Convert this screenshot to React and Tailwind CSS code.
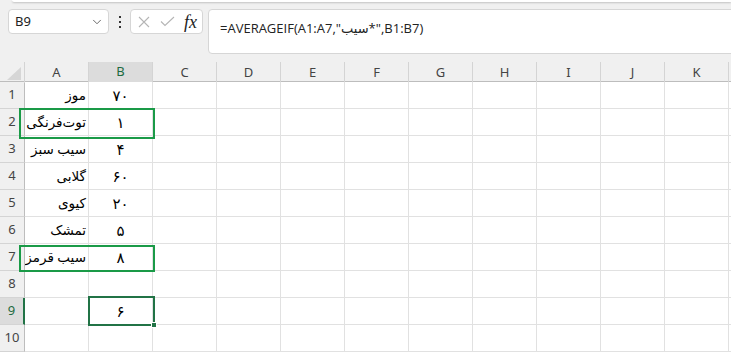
import { ChevronDown } from 'lucide-react'

const cols = ['A', 'B', 'C', 'D', 'E', 'F', 'G', 'H', 'I', 'J', 'K', '']

const rows = [
  ['موز', '۷۰'],
  ['توت‌فرنگی', '۱'],
  ['سیب سبز', '۴'],
  ['گلابی', '۶۰'],
  ['کیوی', '۲۰'],
  ['تمشک', '۵'],
  ['سیب قرمز', '۸'],
  ['', ''],
  ['', '۶'],
  ['', ''],
]

const uiFont = { fontFamily: '"Noto Sans", "DejaVu Sans", sans-serif' }

const Toolbar = () => (
  <div className="flex items-start h-[54px] pt-[9px] pl-[8px]">
    {/* name box */}
    <div className="flex items-center justify-between w-[101px] h-[25px] bg-white border border-[#d6d6d6] rounded-[4px] pl-[6px] pr-[4px]">
      <span className="text-[13px] text-[#222]">B9</span>
      <ChevronDown size={14} strokeWidth={1.5} className="text-[#555]" />
    </div>

    {/* more */}
    <div className="w-[21px] h-[25px] flex items-center justify-center">
      <svg width="4" height="14" viewBox="0 0 4 14">
        <rect x="1" y="1" width="2" height="2" fill="#333" />
        <rect x="1" y="6" width="2" height="2" fill="#333" />
        <rect x="1" y="11" width="2" height="2" fill="#333" />
      </svg>
    </div>

    {/* cancel / enter / fx */}
    <div className="flex items-center w-[73px] h-[25px] bg-white border border-[#d6d6d6] rounded-[4px] pl-[6px]">
      <svg width="12" height="12" viewBox="0 0 12 12" className="ml-[1px]">
        <path d="M1 1 L11 11 M11 1 L1 11" stroke="#b5b5b5" strokeWidth="1.1" fill="none" />
      </svg>
      <svg width="15" height="11" viewBox="0 0 15 11" className="ml-[10px]">
        <path d="M1 5.5 L5 9.5 L14 1" stroke="#b5b5b5" strokeWidth="1.1" fill="none" />
      </svg>
      <span
        className="ml-[9px] text-[18px] italic text-[#222] leading-none"
        style={{ fontFamily: '"Liberation Serif", "DejaVu Serif", serif' }}
      >
        fx
      </span>
    </div>

    {/* formula bar */}
    <div className="flex-1 h-[45px] ml-[5px] mr-[-8px] bg-white border border-[#d6d6d6] rounded-[4px] pl-[11px] pt-[5px]">
      <span className="text-[13px] text-[#222]" style={{ fontFamily: '"Open Sans", "DejaVu Sans", sans-serif' }}>
        =AVERAGEIF(A1:A7,"سیب*",B1:B7)
      </span>
    </div>
  </div>
)

const Grid = () => (
  <div className="relative mt-[8px]">
    {/* header row */}
    <div className="grid grid-cols-[25px_repeat(12,64px)] h-[20px] border-b border-[#bdbdbd]">
      <div className="relative border-r border-[#d4d4d4]">
        <svg width="14" height="13" viewBox="0 0 14 13" className="absolute right-[3px] bottom-[3px]">
          <path d="M14 0 L14 13 L0 13 Z" fill="#d6d6d6" />
        </svg>
      </div>
      {cols.map((c, j) => (
        <div
          key={j}
          className={`flex items-center justify-center text-[13px] border-r border-[#d4d4d4] ${
            c === 'B' ? 'bg-[#dcdcdc] text-[#1e6b3f] border-b-2 border-b-[#217346] -mb-[1px]' : 'text-[#444]'
          }`}
        >
          {c}
        </div>
      ))}
    </div>

    {/* body rows */}
    {rows.map((r, i) => (
      <div key={i} className="grid grid-cols-[25px_repeat(12,64px)] h-[27px]">
        <div
          className={`flex items-center justify-center text-[13px] border-b border-[#d4d4d4] ${
            i === 8
              ? 'bg-[#dcdcdc] text-[#1e6b3f] border-r-2 border-r-[#217346]'
              : 'text-[#444] border-r border-r-[#bdbdbd]'
          }`}
        >
          {i + 1}
        </div>
        <div className="flex items-center justify-end overflow-hidden pr-[2px] bg-white border-r border-b border-[#e1e1e1]">
          <span dir="rtl" className="whitespace-nowrap text-[13.5px] text-black" style={uiFont}>
            {r[0]}
          </span>
        </div>
        <div className="flex items-center justify-center bg-white border-r border-b border-[#e1e1e1]">
          <span className="text-[15px] text-black" style={uiFont}>
            {r[1]}
          </span>
        </div>
        {cols.slice(2).map((c, j) => (
          <div key={j} className="bg-white border-r border-b border-[#e1e1e1]" />
        ))}
      </div>
    ))}

    {/* annotation boxes */}
    <div className="absolute left-[19px] top-[46px] w-[136px] h-[31px] border-2 border-[#1a9a47]" />
    <div className="absolute left-[19px] top-[183px] w-[136px] h-[27px] border-2 border-[#1a9a47]" />

    {/* active cell B9 */}
    <div className="absolute left-[88px] top-[234px] w-[67px] h-[30px] border-2 border-[#217346]" />
    <div className="absolute left-[151px] top-[260px] w-[6px] h-[6px] bg-[#217346] border border-white" />
  </div>
)

export default function App() {
  return (
    <div className="relative w-[731px] h-[352px] overflow-hidden bg-[#f0f0f0]" style={uiFont}>
      <div className="absolute left-[12px] right-0 top-0 h-[2px] bg-white rounded-bl-[4px] shadow-[0_1px_2px_rgba(0,0,0,0.2)]" />
      <Toolbar />
      <Grid />
    </div>
  )
}
